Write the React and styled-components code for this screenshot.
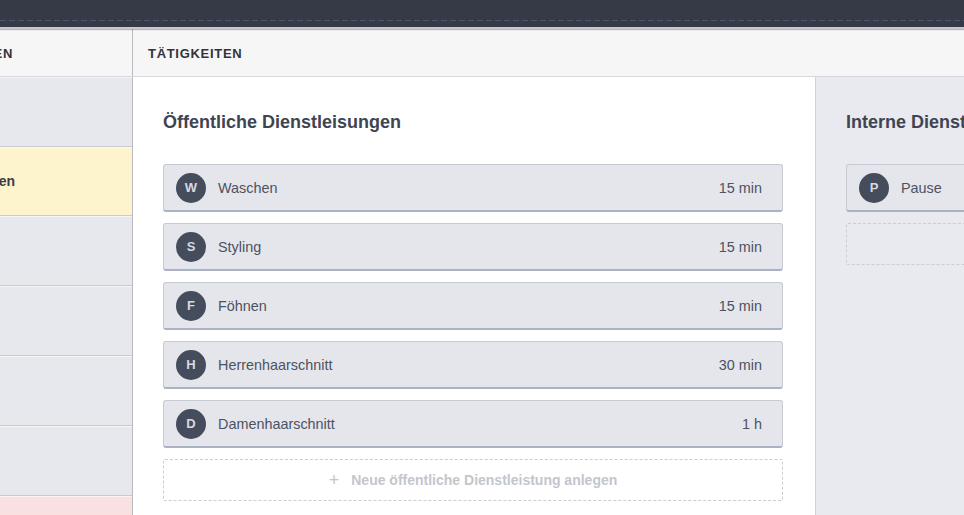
import styled, { createGlobalStyle } from 'styled-components';

const GlobalStyle = createGlobalStyle`
  html, body {
    margin: 0;
    padding: 0;
    height: 100%;
    overflow: hidden;
  }
  body {
    font-family: "Liberation Sans", Arial, sans-serif;
    background: #ffffff;
  }
  #root {
    height: 100%;
  }
`;

const Page = styled.div`
  display: flex;
  flex-direction: column;
  height: 100vh;
  width: 100vw;
  overflow: hidden;
`;

const TopBar = styled.div`
  flex: 0 0 27px;
  background:
    repeating-linear-gradient(to right, #4a5572 0 6px, transparent 6px 9px) 0 20px / 100% 1px no-repeat,
    #363a46;
  box-shadow: 0 1px 1px rgba(0, 0, 0, 0.25);
  border-bottom: 2px solid #c9c9cb;
  position: relative;
  z-index: 2;
`;

const HeaderRow = styled.div`
  flex: 0 0 47px;
  display: flex;
  background: #f6f6f6;
  border-bottom: 1px solid #d6d7da;
`;

const HeaderCell = styled.div`
  display: flex;
  align-items: center;
  white-space: nowrap;
  overflow: hidden;
  font-size: 13px;
  font-weight: bold;
  letter-spacing: 0.7px;
  color: #333438;
  padding-top: 1px;
  ${(p) =>
    p.$side
      ? `
    flex: 0 0 133px;
    justify-content: flex-end;
    padding-right: 119px;
    box-sizing: border-box;
    border-right: 1px solid #bcbdc0;
  `
      : `
    flex: 1;
    padding-left: 15px;
  `}
`;

const Body = styled.div`
  flex: 1;
  display: flex;
  min-height: 0;
`;

const SideColumn = styled.div`
  flex: 0 0 133px;
  box-sizing: border-box;
  display: flex;
  flex-direction: column;
  background: #e6e8ed;
  border-right: 1px solid #b9bbc0;
  overflow: hidden;
`;

const rowColors = {
  normal: '#e6e8ed',
  active: '#fdf3cc',
  alert: '#fae1e1',
};

const SideRow = styled.div`
  flex: 0 0 ${(p) => p.$height || 69}px;
  display: flex;
  align-items: center;
  justify-content: flex-end;
  padding-right: 117px;
  white-space: nowrap;
  overflow: hidden;
  background: ${(p) => rowColors[p.$tone || 'normal']};
  border-bottom: 1px solid #c8cbd3;
  box-shadow: inset 0 1px 0 rgba(255, 255, 255, 0.6);
  font-size: 14px;
  font-weight: bold;
  color: #3b3e46;
`;

const Column = styled.section`
  display: flex;
  flex-direction: column;
  box-sizing: border-box;
  ${(p) =>
    p.$internal
      ? `
    flex: 1;
    background: #e8eaef;
    padding: 0 0 0 30px;
    min-width: 0;
  `
      : `
    flex: 0 0 683px;
    background: #ffffff;
    padding: 0 32px 0 30px;
    border-right: 1px solid #cfd2d8;
  `}
`;

const ColumnTitle = styled.h2`
  margin: 34px 0 0;
  height: 22px;
  line-height: 22px;
  font-size: 18px;
  font-weight: bold;
  color: #3f4452;
  white-space: nowrap;
`;

const List = styled.div`
  display: flex;
  flex-direction: column;
  gap: 11px;
  margin-top: 31px;
  ${(p) => (p.$narrow ? 'width: 300px;' : '')}
`;

const Item = styled.div`
  height: 48px;
  box-sizing: border-box;
  display: flex;
  align-items: center;
  padding: 0 20px 0 12px;
  background: #e4e6ec;
  border: 1px solid #c6cad4;
  border-bottom: 2px solid #abb2c3;
  border-radius: 3px;
  color: #4d5260;
  font-size: 14.4px;
`;

const Badge = styled.span`
  flex: 0 0 30px;
  height: 30px;
  border-radius: 50%;
  background: #454c5b;
  color: #d6d9e0;
  font-size: 13px;
  font-weight: bold;
  display: flex;
  align-items: center;
  justify-content: center;
  margin-right: 12px;
`;

const ItemName = styled.span`
  flex: 1;
`;

const Duration = styled.span`
  color: #4d5260;
`;

const AddButton = styled.button`
  height: 42px;
  box-sizing: border-box;
  border: 1px dashed #cacdd3;
  border-radius: 2px;
  background: transparent;
  display: flex;
  align-items: center;
  justify-content: center;
  gap: 12px;
  font-family: inherit;
  font-size: 14px;
  font-weight: bold;
  color: #c3c6cc;
  cursor: pointer;
`;

const Plus = styled.span`
  font-size: 18px;
  font-weight: normal;
  color: #c3c6cc;
`;

const publicServices = [
  { letter: 'W', name: 'Waschen', time: '15 min' },
  { letter: 'S', name: 'Styling', time: '15 min' },
  { letter: 'F', name: 'Föhnen', time: '15 min' },
  { letter: 'H', name: 'Herrenhaarschnitt', time: '30 min' },
  { letter: 'D', name: 'Damenhaarschnitt', time: '1 h' },
];

const internalServices = [{ letter: 'P', name: 'Pause', time: '' }];

function ServiceItem({ service }) {
  return (
    <Item>
      <Badge>{service.letter}</Badge>
      <ItemName>{service.name}</ItemName>
      {service.time && <Duration>{service.time}</Duration>}
    </Item>
  );
}

export default function App() {
  return (
    <Page>
      <GlobalStyle />
      <TopBar />
      <HeaderRow>
        <HeaderCell $side>MITARBEITERINNEN</HeaderCell>
        <HeaderCell>TÄTIGKEITEN</HeaderCell>
      </HeaderRow>
      <Body>
        <SideColumn>
          <SideRow />
          <SideRow $tone="active" $height={68}>Alle Mitarbeiterinnen</SideRow>
          <SideRow />
          <SideRow />
          <SideRow />
          <SideRow />
          <SideRow $tone="alert" />
        </SideColumn>
        <Column>
          <ColumnTitle>Öffentliche Dienstleisungen</ColumnTitle>
          <List>
            {publicServices.map((s) => (
              <ServiceItem key={s.name} service={s} />
            ))}
            <AddButton type="button">
              <Plus>+</Plus>
              Neue öffentliche Dienstleistung anlegen
            </AddButton>
          </List>
        </Column>
        <Column $internal>
          <ColumnTitle>Interne Dienstleistungen</ColumnTitle>
          <List $narrow>
            {internalServices.map((s) => (
              <ServiceItem key={s.name} service={s} />
            ))}
            <AddButton type="button" />
          </List>
        </Column>
      </Body>
    </Page>
  );
}
